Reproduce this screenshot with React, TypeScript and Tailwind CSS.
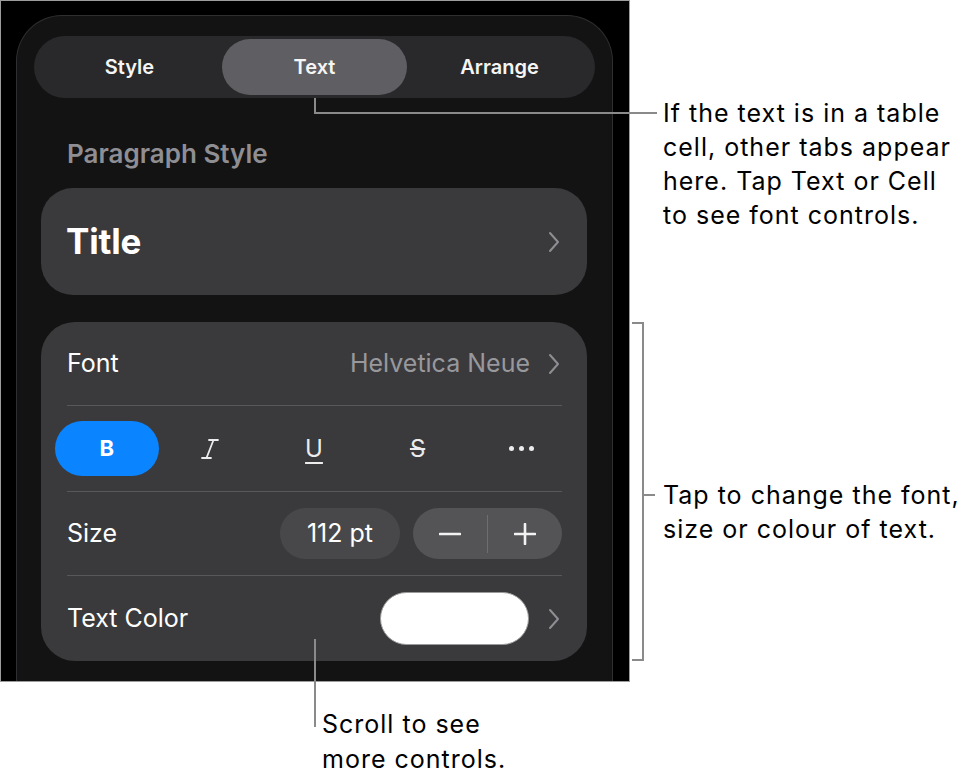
import React from "react";

function Chevron({ className = "" }: { className?: string }) {
  return (
    <svg width="12" height="22" viewBox="0 0 12 22" className={className} fill="none">
      <path d="M2 2 L10 11 L2 20" stroke="#8e8e93" strokeWidth="2" strokeLinecap="round" strokeLinejoin="round" />
    </svg>
  );
}

function Divider() {
  return <div className="h-px bg-[#58585c] ml-[26px] mr-[25px]" />;
}

const tabs = ["Style", "Text", "Arrange"];

export default function App() {
  return (
    <div
      className="relative w-[979px] h-[779px] bg-white overflow-hidden"
      style={{ fontFamily: "Inter, 'Noto Sans', sans-serif" }}
    >
      {/* screenshot frame */}
      <div className="w-[630px] h-[682px] border border-[#9c9c9c] bg-black overflow-hidden pt-[14px] pl-[15px]">
        <div className="w-[597px] h-[700px] rounded-t-[46px] border border-b-0 border-[#2f2f31] bg-[#131314] pt-[20px] px-[17px]">
          {/* segmented control */}
          <div className="h-[62px] rounded-full bg-[#29292b] p-[3px] flex">
            {tabs.map((t) => (
              <div
                key={t}
                className={`flex-1 flex items-center justify-center rounded-full text-[20px] font-semibold text-[#f5f5f5] ${
                  t === "Text" ? "bg-[#5f5f63]" : ""
                }`}
              >
                {t}
              </div>
            ))}
          </div>

          <div className="mt-[41px] pl-[33px] text-[26px] leading-[30px] font-semibold text-[#8e8e93]">
            Paragraph Style
          </div>

          {/* title card */}
          <div className="mt-[19px] ml-[7px] mr-[8px] h-[107px] rounded-[32px] bg-[#3a3a3c] flex items-center justify-between pl-[25px] pr-[27px]">
            <span className="text-[35px] font-bold text-white tracking-[-0.2px]">Title</span>
            <Chevron />
          </div>

          {/* font card */}
          <div className="mt-[27px] ml-[7px] mr-[8px] rounded-[34px] bg-[#3a3a3c]">
            <div className="h-[83px] flex items-center justify-between pl-[26px] pr-[27px]">
              <span className="text-[25px] text-white">Font</span>
              <div className="flex items-center gap-[18px]">
                <span className="text-[25px] text-[#98989d]">Helvetica Neue</span>
                <Chevron />
              </div>
            </div>
            <Divider />
            <div className="h-[85px] px-[14px] grid grid-cols-5 items-center">
              <div className="h-[55px] rounded-full bg-[#0a84ff] flex items-center justify-center text-[22px] font-bold text-white">
                B
              </div>
              <div className="flex items-center justify-center">
                <svg width="20" height="24" viewBox="0 0 20 24" fill="none">
                  <path d="M9 3 H18 M2 21 H11 M13.5 3 L6.5 21" stroke="#ececec" strokeWidth="1.8" strokeLinecap="round" />
                </svg>
              </div>
              <div className="flex items-center justify-center">
                <span className="text-[24px] text-[#ececec] underline decoration-[1.5px] underline-offset-[5px]">U</span>
              </div>
              <div className="flex items-center justify-center">
                <span className="text-[24px] text-[#ececec] line-through decoration-[1.5px]">S</span>
              </div>
              <div className="flex items-center justify-center gap-[5px]">
                <span className="w-[5px] h-[5px] rounded-full bg-[#ececec]" />
                <span className="w-[5px] h-[5px] rounded-full bg-[#ececec]" />
                <span className="w-[5px] h-[5px] rounded-full bg-[#ececec]" />
              </div>
            </div>
            <Divider />
            <div className="h-[83px] flex items-center justify-between pl-[26px] pr-[25px]">
              <span className="text-[25px] text-white">Size</span>
              <div className="flex items-center gap-[13px]">
                <div className="w-[120px] h-[51px] rounded-full bg-[#48484a] flex items-center justify-center text-[25px] text-white">
                  112 pt
                </div>
                <div className="w-[149px] h-[51px] rounded-full bg-[#545457] flex items-center">
                  <div className="flex-1 flex items-center justify-center">
                    <svg width="22" height="4" viewBox="0 0 22 4">
                      <path d="M1 2 H21" stroke="#f2f2f2" strokeWidth="2.6" strokeLinecap="round" />
                    </svg>
                  </div>
                  <div className="w-px h-[38px] bg-[#6e6e72]" />
                  <div className="flex-1 flex items-center justify-center">
                    <svg width="22" height="22" viewBox="0 0 22 22">
                      <path d="M1 11 H21 M11 1 V21" stroke="#f2f2f2" strokeWidth="2.6" strokeLinecap="round" />
                    </svg>
                  </div>
                </div>
              </div>
            </div>
            <Divider />
            <div className="h-[85px] flex items-center justify-between pl-[26px] pr-[27px]">
              <span className="text-[25px] text-white">Text Color</span>
              <div className="flex items-center gap-[19px]">
                <div className="w-[149px] h-[53px] rounded-full bg-white border border-[#9a9a9a]" />
                <Chevron />
              </div>
            </div>
          </div>
        </div>
      </div>

      {/* callout: tabs */}
      <div className="absolute left-[314px] top-[98px] w-[2px] h-[16px] bg-[#8a8a8a]" />
      <div className="absolute left-[314px] top-[112px] w-[343px] h-[2px] bg-[#8a8a8a]" />
      <div className="absolute left-[663px] top-[96px] text-[25px] leading-[34px] tracking-[1px] text-black">
        If the text is in a table
        <br />
        cell, other tabs appear
        <br />
        here. Tap Text or Cell
        <br />
        to see font controls.
      </div>

      {/* callout: bracket */}
      <div className="absolute left-[632px] top-[322px] w-[12px] h-[2px] bg-[#8a8a8a]" />
      <div className="absolute left-[642px] top-[322px] w-[2px] h-[339px] bg-[#8a8a8a]" />
      <div className="absolute left-[632px] top-[659px] w-[12px] h-[2px] bg-[#8a8a8a]" />
      <div className="absolute left-[642px] top-[494px] w-[13px] h-[2px] bg-[#8a8a8a]" />
      <div className="absolute left-[663px] top-[478px] text-[25px] leading-[34px] tracking-[1px] text-black">
        Tap to change the font,
        <br />
        size or colour of text.
      </div>

      {/* callout: scroll */}
      <div className="absolute left-[314px] top-[639px] w-[2px] h-[88px] bg-[#8a8a8a]" />
      <div className="absolute left-[322px] top-[707px] text-[25px] leading-[35px] tracking-[1px] text-black">
        Scroll to see
        <br />
        more controls.
      </div>
    </div>
  );
}
